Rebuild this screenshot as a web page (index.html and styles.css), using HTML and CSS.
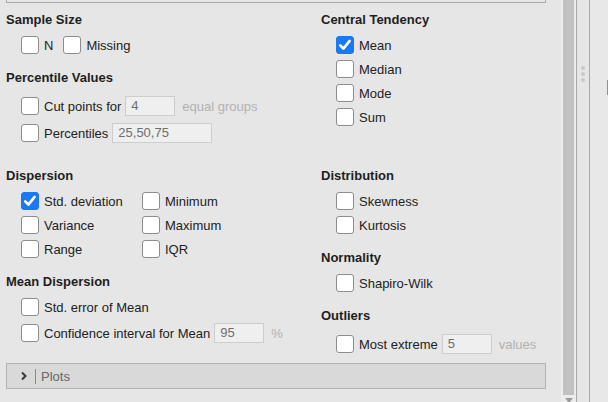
FILE: index.html
```html
<!DOCTYPE html>
<html>
<head>
<meta charset="utf-8">
<link rel="stylesheet" href="styles.css">
</head>
<body>
<div class="app">
  <div class="main">
    <div class="stub"></div>
    <div class="grid">
      <div class="col">
        <div class="sec">
          <div class="hdr">Sample Size</div>
          <div class="rows inline">
            <label class="row"><span class="cb"></span><span class="lb">N</span></label>
            <label class="row"><span class="cb"></span><span class="lb">Missing</span></label>
          </div>
        </div>
        <div class="sec">
          <div class="hdr">Percentile Values</div>
          <div class="rows inp">
            <label class="row"><span class="cb"></span><span class="lb">Cut points for</span><span class="field w50">4</span><span class="suffix">equal groups</span></label>
            <label class="row"><span class="cb"></span><span class="lb">Percentiles</span><span class="field w100">25,50,75</span></label>
          </div>
        </div>
      </div>
      <div class="col">
        <div class="sec">
          <div class="hdr">Central Tendency</div>
          <div class="rows">
            <label class="row"><span class="cb on"><svg viewBox="0 0 18 18"><path d="M3.6 9.4 L7.2 13 L14.2 4.4"/></svg></span><span class="lb">Mean</span></label>
            <label class="row"><span class="cb"></span><span class="lb">Median</span></label>
            <label class="row"><span class="cb"></span><span class="lb">Mode</span></label>
            <label class="row"><span class="cb"></span><span class="lb">Sum</span></label>
          </div>
        </div>
      </div>
      <div class="col">
        <div class="sec">
          <div class="hdr">Dispersion</div>
          <div class="rows two">
            <label class="row"><span class="cb on"><svg viewBox="0 0 18 18"><path d="M3.6 9.4 L7.2 13 L14.2 4.4"/></svg></span><span class="lb">Std. deviation</span></label>
            <label class="row"><span class="cb"></span><span class="lb">Minimum</span></label>
            <label class="row"><span class="cb"></span><span class="lb">Variance</span></label>
            <label class="row"><span class="cb"></span><span class="lb">Maximum</span></label>
            <label class="row"><span class="cb"></span><span class="lb">Range</span></label>
            <label class="row"><span class="cb"></span><span class="lb">IQR</span></label>
          </div>
        </div>
        <div class="sec">
          <div class="hdr">Mean Dispersion</div>
          <div class="rows tight">
            <label class="row"><span class="cb"></span><span class="lb">Std. error of Mean</span></label>
            <label class="row"><span class="cb"></span><span class="lb">Confidence interval for Mean</span><span class="field w50">95</span><span class="suffix">%</span></label>
          </div>
        </div>
      </div>
      <div class="col">
        <div class="sec">
          <div class="hdr">Distribution</div>
          <div class="rows">
            <label class="row"><span class="cb"></span><span class="lb">Skewness</span></label>
            <label class="row"><span class="cb"></span><span class="lb">Kurtosis</span></label>
          </div>
        </div>
        <div class="sec">
          <div class="hdr">Normality</div>
          <div class="rows">
            <label class="row"><span class="cb"></span><span class="lb">Shapiro-Wilk</span></label>
          </div>
        </div>
        <div class="sec">
          <div class="hdr">Outliers</div>
          <div class="rows inp">
            <label class="row"><span class="cb"></span><span class="lb">Most extreme</span><span class="field w50">5</span><span class="suffix">values</span></label>
          </div>
        </div>
      </div>
    </div>
    <div class="plots">
      <svg class="chev" viewBox="0 0 8 10"><path d="M2 1.5 L5.5 5 L2 8.5"/></svg>
      <span class="bar"></span>
      <span class="ptitle">Plots</span>
    </div>
  </div>
  <div class="scroll">
    <div class="thumb"></div>
    <svg class="arrow" viewBox="0 0 8 5"><path d="M0 0 H8 L4 5 Z"/></svg>
  </div>
  <div class="sep"></div>
  <div class="gutter">
    <span class="dot"></span><span class="dot"></span><span class="dot"></span>
  </div>
  <div class="sep"></div>
  <div class="pane">
    <span class="mark"></span>
  </div>
</div>
</body>
</html>
```
FILE: styles.css
```css
* { box-sizing: border-box; }
html, body {
  margin: 0;
  padding: 0;
  width: 608px;
  height: 402px;
  overflow: hidden;
  background: #e6e6e6;
  font-family: "Liberation Sans", Arial, sans-serif;
  font-size: 13px;
  color: #222;
}
.app {
  display: flex;
  height: 402px;
}
.main {
  width: 561px;
  flex: none;
  padding: 0 15px 0 6px;
}
.stub {
  height: 3px;
  border: 1px solid #a9a9a9;
  border-top: none;
}
.grid {
  display: grid;
  grid-template-columns: 315px 225px;
  row-gap: 21px;
  margin-top: 7px;
}
.sec + .sec { margin-top: 11px; }
.hdr {
  height: 20px;
  line-height: 20px;
  font-weight: bold;
  color: #1e1e1e;
}
.rows {
  margin-top: 3px;
  padding-left: 15px;
  display: flex;
  flex-direction: column;
}
.rows.inline { flex-direction: row; gap: 10px; }
.rows.inp { margin-top: 6px; gap: 3px; }
.rows.tight { gap: 2px; }
.rows.two {
  display: grid;
  grid-template-columns: 121px 1fr;
}
.row {
  height: 24px;
  display: flex;
  align-items: center;
  white-space: nowrap;
}
.cb {
  width: 18px;
  height: 18px;
  flex: none;
  border: 1px solid #8c8c8c;
  border-radius: 3px;
  background: #fff;
  display: flex;
}
.cb.on {
  background: #1b78f2;
  border-color: #1b78f2;
}
.cb svg {
  width: 16px;
  height: 16px;
}
.cb path {
  fill: none;
  stroke: #fff;
  stroke-width: 3;
  stroke-linecap: round;
  stroke-linejoin: round;
}
.lb { margin-left: 5px; }
.field {
  margin-left: 4px;
  height: 20px;
  line-height: 18px;
  border: 1px solid #cdcdcd;
  background: #efefef;
  color: #6e6e6e;
  padding: 0 5px;
}
.w50 { width: 50px; }
.w100 { width: 100px; }
.suffix {
  margin-left: 7px;
  color: #b2b2b2;
}
.plots {
  margin-top: 7px;
  height: 26px;
  border: 1px solid #b3b3b3;
  background: #d9d9d9;
  display: flex;
  align-items: center;
  padding-left: 13px;
}
.chev {
  width: 8px;
  height: 10px;
}
.chev path {
  fill: none;
  stroke: #3a3a3a;
  stroke-width: 2;
}
.bar {
  width: 1px;
  height: 15px;
  background: #8a8a8a;
  margin-left: 7px;
}
.ptitle {
  margin-left: 5px;
  color: #666;
}
.scroll {
  width: 15px;
  flex: none;
  background: #ececec;
  padding: 0 2px;
  position: relative;
}
.thumb {
  height: 395px;
  background: #c1c1c1;
}
.arrow {
  position: absolute;
  left: 4px;
  top: 398px;
  width: 8px;
  height: 5px;
  fill: #9a9a9a;
}
.sep {
  width: 1px;
  flex: none;
  background: #a8a8a8;
}
.gutter {
  width: 12px;
  flex: none;
  display: flex;
  flex-direction: column;
  align-items: center;
  padding-top: 66px;
  gap: 2px;
}
.dot {
  width: 4px;
  height: 4px;
  border-radius: 50%;
  background: #c9c9c9;
}
.pane {
  flex: 1;
  background: #e8e8e8;
  position: relative;
}
.mark {
  position: absolute;
  right: 0;
  top: 80px;
  width: 1px;
  height: 15px;
  background: #8093b3;
}
```
